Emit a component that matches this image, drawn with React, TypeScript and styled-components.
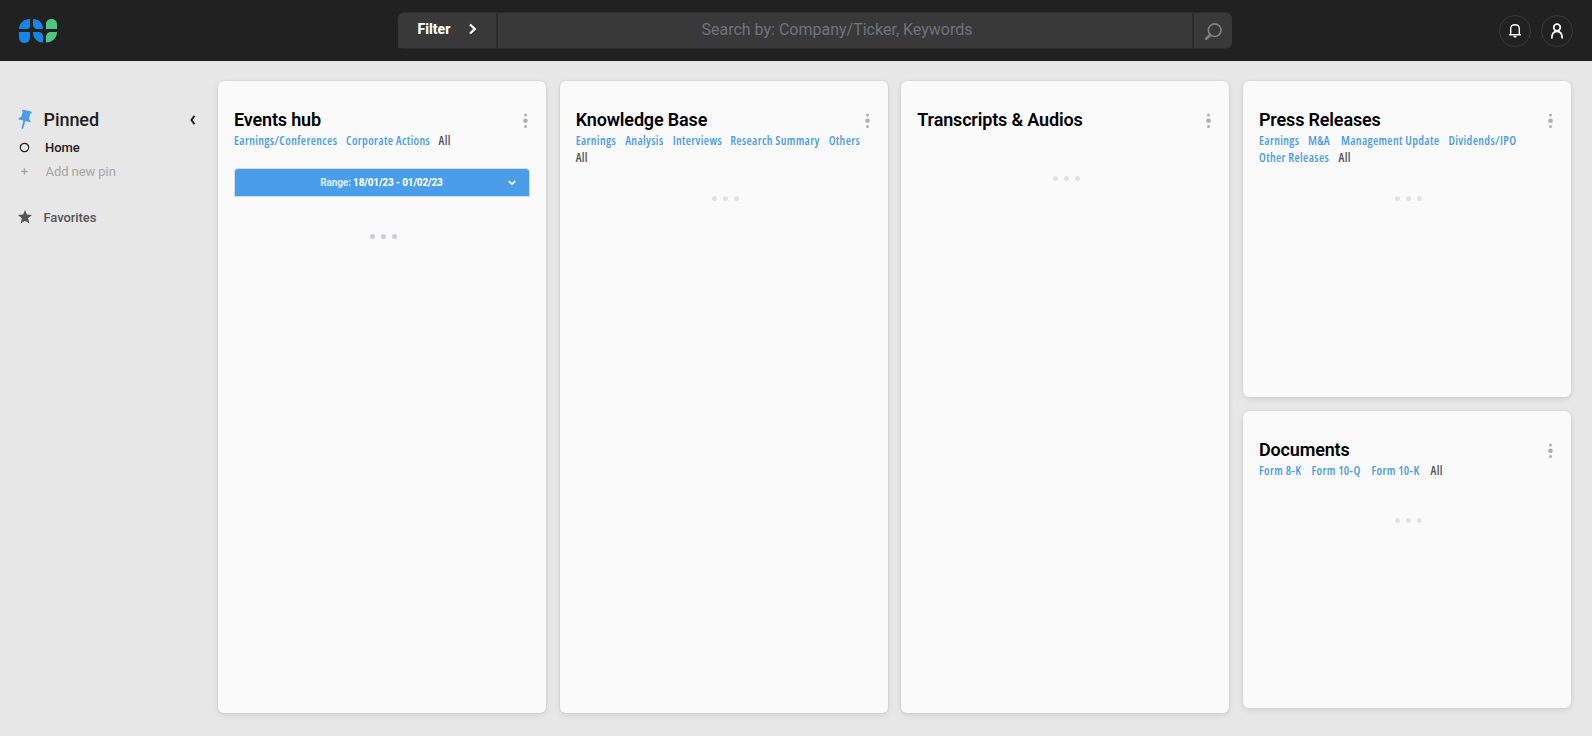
import React from "react";
import styled, { createGlobalStyle } from "styled-components";

const GlobalStyle = createGlobalStyle`
  * { box-sizing: border-box; }
  html, body { margin: 0; padding: 0; height: 100%; background: #e7e7e7; overflow: hidden; }
  body { font-family: Roboto, sans-serif; color: #212121; }
  button, input { font-family: inherit; border: 0; padding: 0; margin: 0; background: none; }
`;

const Page = styled.div`
  width: 100%;
  height: 736px;
  display: flex;
  flex-direction: column;
`;

const Header = styled.header`
  height: 61px;
  flex: none;
  display: grid;
  grid-template-columns: 398px 834px 1fr;
  align-items: start;
  background: #212121;
`;

const Logo = styled.svg`
  display: block;
  margin: 18px 0 0 18px;
`;

const SearchBar = styled.div`
  display: flex;
  height: 37px;
  margin-top: 12px;
  padding: 1px 0;
  border-radius: 6px;
  background: #2c2c2c;
  gap: 2px;
`;

const FilterButton = styled.button`
  width: 98px;
  height: 35px;
  display: flex;
  align-items: center;
  gap: 18px;
  padding: 0 0 3px 19px;
  border-radius: 6px 0 0 0;
  background: #393939;
  color: #fff;
  font-size: 14px;
  font-weight: 800;
  line-height: 18px;
`;

const FilterLabel = styled.span`
  width: 34px;
`;

const SearchInput = styled.input`
  width: 694px;
  height: 35px;
  padding: 0 16px 2px 0;
  background: #393939;
  color: #fff;
  font-size: 16px;
  text-align: center;
  &::placeholder { color: #6c757d; opacity: 1; }
`;

const SearchButton = styled.button`
  width: 38px;
  height: 35px;
  display: grid;
  place-items: center;
  padding-top: 2px;
  border-radius: 0 6px 6px 0;
  background: #393939;
`;

const HeaderActions = styled.div`
  display: flex;
  justify-content: flex-end;
  gap: 10px;
  padding: 15px 19px 0 0;
`;

const RoundButton = styled.button`
  width: 32px;
  height: 32px;
  display: grid;
  place-items: center;
  border: 1px solid #393939;
  border-radius: 50%;
`;

const Body = styled.div`
  display: flex;
  flex: 1;
  min-height: 0;
`;

const Sidebar = styled.nav`
  width: 218px;
  flex: none;
  padding: 46px 22px 0 18px;
`;

const SideRow = styled.div<{ $height: number; $indent: number; $size: number; $weight: number; $color: string }>`
  display: grid;
  grid-template-columns: ${(p) => p.$indent}px 1fr auto;
  align-items: center;
  height: ${(p) => p.$height}px;
  font-size: ${(p) => p.$size}px;
  font-weight: ${(p) => p.$weight};
  letter-spacing: -0.07px;
  color: ${(p) => p.$color};
  svg { display: block; }
`;

const SideGap = styled.div`
  height: 22px;
`;

const Board = styled.main`
  width: 1353px;
  height: 632px;
  margin-top: 20px;
  display: grid;
  grid-template-columns: repeat(4, 1fr);
  gap: 13.67px;
`;

const Stack = styled.div`
  display: flex;
  flex-direction: column;
  gap: 14px;
`;

const Card = styled.section<{ $height: number }>`
  height: ${(p) => p.$height}px;
  padding: 27px 16px 0;
  border-radius: 6px;
  background: #fafafa;
  box-shadow: 0 0 1px 1px rgba(0, 0, 0, 0.04), 0 2px 6px rgba(0, 0, 0, 0.09);
`;

const CardHead = styled.div`
  display: flex;
  justify-content: space-between;
  height: 24px;
`;

const Title = styled.h2`
  margin: 0;
  font-size: 18px;
  line-height: 24px;
  font-weight: 560;
  letter-spacing: -0.16px;
  color: #000;
`;

const MenuIcon = styled.svg`
  display: block;
  margin: 5px 2px 0 0;
`;

const Links = styled.div`
  display: flex;
  flex-wrap: wrap;
  column-gap: 8px;
  width: 290px;
  min-height: 17px;
`;

const LinkItem = styled.a<{ $w: number; $muted?: boolean }>`
  width: ${(p) => p.$w}px;
  white-space: nowrap;
  font-family: "Open Sans", "Noto Sans", sans-serif;
  font-size: 12px;
  font-stretch: 75%;
  letter-spacing: 0.35px;
  line-height: 17px;
  font-weight: 600;
  color: ${(p) => (p.$muted ? "#555" : "#499de9")};
`;

const RangeBar = styled.button`
  width: 296px;
  height: 29px;
  margin-top: 19px;
  display: grid;
  grid-template-columns: 1fr 21px;
  align-items: center;
  border: 1px solid #d5dde4;
  border-radius: 4px 4px 0 0;
  background: #499de9;
  color: #fff;
  font-size: 10px;
  font-weight: 800;
  letter-spacing: -0.17px;
`;

const RangeText = styled.span`
  padding-left: 20px;
  white-space: nowrap;
`;

const RangeLabel = styled.span`
  color: #d3e7fa;
`;

const Loader = styled.div<{ $top: number; $dark?: boolean }>`
  display: flex;
  justify-content: center;
  gap: 6px;
  padding-left: 3px;
  margin-top: ${(p) => p.$top}px;
  i {
    width: 5px;
    height: 5px;
    border-radius: 50%;
    background: ${(p) => (p.$dark ? "#cbced1" : "#e2e2e2")};
  }
`;

type LinkData = [label: string, width: number];

interface PanelProps {
  title: string;
  links?: LinkData[];
  height: number;
  loaderTop: number;
  darkLoader?: boolean;
  children?: React.ReactNode;
}

function Panel({ title, links = [], height, loaderTop, darkLoader, children }: PanelProps) {
  return (
    <Card $height={height}>
      <CardHead>
        <Title>{title}</Title>
        <MenuIcon width="5" height="16" viewBox="0 0 5 16" fill="#b0b0b0">
          <circle cx="2.5" cy="2" r="1.5" />
          <circle cx="2.5" cy="7.7" r="2.3" />
          <circle cx="2.5" cy="13.4" r="1.5" />
        </MenuIcon>
      </CardHead>
      <Links>
        {links.map(([label, width]) => (
          <LinkItem key={label} $w={width} $muted={label === "All"}>{label}</LinkItem>
        ))}
      </Links>
      {children}
      <Loader $top={loaderTop} $dark={darkLoader}><i /><i /><i /></Loader>
    </Card>
  );
}

export default function App() {
  return (
    <Page>
      <GlobalStyle />
      <Header>
        <Logo width="40" height="26" viewBox="0 0 40 26">
          <g fill="#1785e5">
            <path d="M12 1v7c0 2-1 3-3 3H1C1 5 6 1 12 1Z" />
            <path d="M15 1c6 0 10 4 10 10h-6c-2 0-4-2-4-4Z" />
            <path d="M1 14h11v5.500a5.500 5.500 0 0 1-11 0Z" />
            <path d="M15 14h6c2 0 4 2 4 4v6.500C19 24.500 15 20 15 14Z" />
          </g>
          <g fill="#50c780">
            <path d="M28 11V6.200a5.500 5.500 0 0 1 11 0V11Z" />
            <path d="M39 14c0 6-5 10.500-11 10.500V19c0-3 2-5 5-5Z" />
          </g>
        </Logo>
        <SearchBar>
          <FilterButton>
            <FilterLabel>Filter</FilterLabel>
            <svg width="8" height="12" viewBox="0 0 8 12" fill="none" stroke="#fff" strokeWidth="2.3">
              <path d="M1 1.500 5.800 6 1 10.500" />
            </svg>
          </FilterButton>
          <SearchInput placeholder="Search by: Company/Ticker, Keywords" />
          <SearchButton aria-label="Search">
            <svg width="18" height="18" viewBox="0 0 18 18" fill="none" stroke="#808080">
              <circle cx="10.700" cy="7.200" r="6.300" strokeWidth="1.600" />
              <path d="m6 12-3.700 3.800" strokeWidth="2.700" strokeLinecap="round" />
            </svg>
          </SearchButton>
        </SearchBar>
        <HeaderActions>
          <RoundButton aria-label="Notifications">
            <svg width="14" height="16" viewBox="0 0 14 16" fill="none" stroke="#fff" strokeWidth="1.400">
              <path d="M2.700 11.300V5.700C2.700 3 4.500 1.700 7 1.700s4.300 1.300 4.300 4v5.600M1.200 11.700h11.600" />
              <path d="M5 13h4L7 15Z" fill="#fff" stroke="none" />
            </svg>
          </RoundButton>
          <RoundButton aria-label="Account">
            <svg width="14" height="18" viewBox="0 0 14 18" fill="none" stroke="#fff" strokeWidth="1.700">
              <circle cx="7" cy="5.500" r="3.300" />
              <path d="M1.800 16.600c0-4.600 2-7.200 5.200-7.200s5.200 2.600 5.200 7.200" />
            </svg>
          </RoundButton>
        </HeaderActions>
      </Header>

      <Body>
        <Sidebar>
          <SideRow $height={25} $indent={25.5} $size={18} $weight={530} $color="#212121">
            <svg width="15" height="21" viewBox="0 0 15 21" fill="#499de9">
              <path d="m4.500.5 9.300 2.300-.4 1.900-1.300.1-1.100 5.100c1 .8 1.800 2 1.500 3.300l-5.200-1.200-2.200 7.900-1.600-.4 1.900-8L.3 10.300c.3-1.300 1.400-2 2.900-2.300l1.500-5.100-.7-.8Z" />
            </svg>
            <span>Pinned</span>
            <svg width="6" height="12" viewBox="0 -1 6 12" fill="none" stroke="#212121" strokeWidth="2">
              <path d="M4.500.7 1.500 5l3 4.300" />
            </svg>
          </SideRow>
          <SideRow $height={30} $indent={27} $size={13} $weight={500} $color="#212121">
            <svg width="13" height="11" viewBox="0 0 13 11" fill="none" stroke="#212121" strokeWidth="1.200">
              <circle cx="6.500" cy="5.500" r="4.200" />
            </svg>
            <span>Home</span>
          </SideRow>
          <SideRow $height={19} $indent={27.5} $size={13} $weight={400} $color="#a5a5a5">
            <svg width="13" height="7" viewBox="0 0 13 7" fill="none" stroke="#a5a5a5" strokeWidth="1.300">
              <path d="M6.400.3v6.400M3.200 3.500h6.400" />
            </svg>
            <span>Add new pin</span>
          </SideRow>
          <SideGap />
          <SideRow $height={28} $indent={25.5} $size={13} $weight={500} $color="#555">
            <svg width="14" height="14" viewBox="0 0 14 14" fill="#555">
              <path d="m7 0 1.900 4.600 5.100.4-3.900 3.200 1.300 5.300L7 10.700l-4.400 2.800 1.300-5.300L0 5l5.100-.4Z" />
            </svg>
            <span>Favorites</span>
          </SideRow>
        </Sidebar>

        <Board>
          <Panel
            title="Events hub"
            height={632}
            loaderTop={37}
            darkLoader
            links={[["Earnings/Conferences", 104], ["Corporate Actions", 84.500], ["All", 14]]}
          >
            <RangeBar>
              <RangeText><RangeLabel>Range:</RangeLabel> 18/01/23 - 01/02/23</RangeText>
              <svg width="8" height="6" viewBox="0 0 8 6" fill="none" stroke="#fff" strokeWidth="1.600">
                <path d="m.8 1.200 3.200 2.900 3.200-2.900" />
              </svg>
            </RangeBar>
          </Panel>
          <Panel
            title="Knowledge Base"
            height={632}
            loaderTop={30}
            links={[["Earnings", 41.500], ["Analysis", 39.500], ["Interviews", 49.500], ["Research Summary", 90.500], ["Others", 32], ["All", 14]]}
          />
          <Panel title="Transcripts & Audios" height={632} loaderTop={27} />
          <Stack>
            <Panel
              title="Press Releases"
              height={316}
              loaderTop={30}
              links={[["Earnings", 41], ["M&A", 25], ["Management Update", 99.500], ["Dividends/IPO", 69], ["Other Releases", 71.500], ["All", 14]]}
            />
            <Panel
              title="Documents"
              height={297}
              loaderTop={39}
              links={[["Form 8-K", 44.500], ["Form 10-Q", 52], ["Form 10-K", 51], ["All", 14]]}
            />
          </Stack>
        </Board>
      </Body>
    </Page>
  );
}
